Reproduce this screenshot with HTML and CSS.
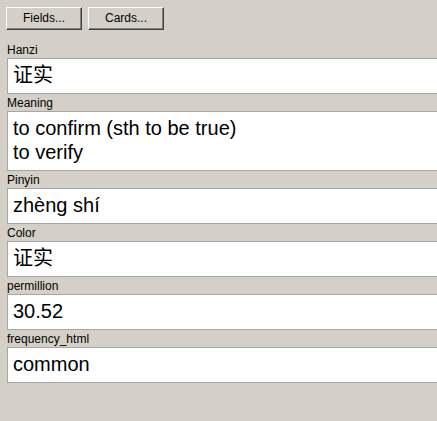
FILE: index.html
```html
<!DOCTYPE html>
<html>
<head>
<meta charset="utf-8">
<link rel="stylesheet" href="styles.css">
</head>
<body>
<div class="toolbar">
  <button class="btn">Fields...</button>
  <button class="btn">Cards...</button>
</div>
<div class="fields">
  <div class="field">
    <div class="label">Hanzi</div>
    <div class="box first">证实</div>
  </div>
  <div class="field">
    <div class="label">Meaning</div>
    <div class="box">to confirm (sth to be true)<br>to verify</div>
  </div>
  <div class="field">
    <div class="label">Pinyin</div>
    <div class="box">zhèng shí</div>
  </div>
  <div class="field">
    <div class="label">Color</div>
    <div class="box">证实</div>
  </div>
  <div class="field">
    <div class="label">permillion</div>
    <div class="box">30.52</div>
  </div>
  <div class="field">
    <div class="label">frequency_html</div>
    <div class="box">common</div>
  </div>
</div>
</body>
</html>
```
FILE: styles.css
```css
html, body {
  margin: 0;
  padding: 0;
  background: #d4d0c8;
  overflow: hidden;
}
body {
  width: 437px;
  height: 421px;
  font-family: "Liberation Sans", Arial, "Noto Sans CJK SC", sans-serif;
  color: #000;
}
.toolbar {
  display: flex;
  gap: 6px;
  padding: 7px 0 0 6px;
}
.btn {
  box-sizing: border-box;
  width: 76px;
  height: 23px;
  margin: 0;
  padding: 0 0 1px 0;
  background: #d4d0c8;
  font-family: "Liberation Sans", Arial, sans-serif;
  font-size: 12px;
  color: #000;
  border-style: solid;
  border-width: 1px;
  border-color: #ffffff #404040 #404040 #ffffff;
  box-shadow: inset -1px -1px 0 #808080;
}
.fields {
  display: flex;
  flex-direction: column;
  padding: 11px 0 0 7px;
}
.label {
  height: 17px;
  font-size: 12px;
  line-height: 14px;
  padding-top: 2px;
  box-sizing: border-box;
}
.box {
  box-sizing: border-box;
  width: 440px;
  min-height: 36px;
  background: #fff;
  border: 1px solid #a6a6a6;
  padding: 4px 5px 6px 5px;
  font-size: 20px;
  line-height: 24px;
  font-family: "Liberation Sans", Arial, "Noto Sans CJK SC", sans-serif;
}
.box.first {
  min-height: 35px;
}
```
